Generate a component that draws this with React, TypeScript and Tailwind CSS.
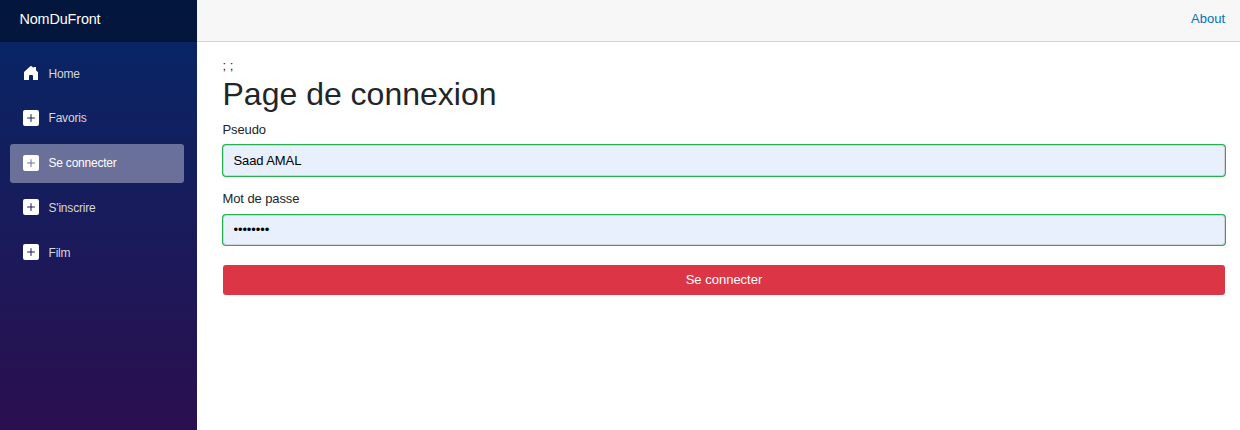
import { BsPlusSquareFill } from 'react-icons/bs';

function HomeIcon({ className }: { className?: string }) {
  return (
    <svg viewBox="0 0 16 16" fill="currentColor" className={className}>
      <path d="M6 15H1.500a.5.5 0 0 1-.5-.5V7.500c0-.3.1-.6.3-.8L7.300 1.300a1 1 0 0 1 1.400 0L10.500 3V2H13v3.300l1.600 1.500c.2.200.4.500.4.800v6.900a.5.5 0 0 1-.5.5H10v-4a1 1 0 0 0-1-1H7a1 1 0 0 0-1 1z" />
    </svg>
  );
}

const links = [
  { label: 'Home', icon: HomeIcon, active: false },
  { label: 'Favoris', icon: BsPlusSquareFill, active: false },
  { label: 'Se connecter', icon: BsPlusSquareFill, active: true },
  { label: "S'inscrire", icon: BsPlusSquareFill, active: false },
  { label: 'Film', icon: BsPlusSquareFill, active: false },
];

function Sidebar() {
  return (
    <aside className="w-[197px] shrink-0 bg-[linear-gradient(180deg,#052767_0px,#3a0647_600px)]">
      <div className="flex h-[42px] items-center bg-black/40 pb-[3px] pl-[19.5px] text-[14.4px] tracking-[-0.14px] text-white">
        NomDuFront
      </div>
      <nav className="flex flex-col gap-[5.8px] px-[10px] pt-[12.1px]">
        {links.map(({ label, icon: Icon, active }) => (
          <a
            key={label}
            href="#"
            className={
              active
                ? 'flex h-[39px] w-[174px] items-center rounded-[3px] bg-white/37 pl-[13px] text-[12px] tracking-[-0.22px] text-white'
                : 'flex h-[39px] w-[174px] items-center rounded-[3px] pl-[13px] text-[12px] tracking-[-0.2px] text-[#d7d7d7]'
            }
          >
            <Icon className="mr-[9.5px] mb-[1.2px] size-4 text-white" />
            <span>{label}</span>
          </a>
        ))}
      </nav>
    </aside>
  );
}

const inputClass =
  'block w-full rounded-[3px] border border-[#ced4da] bg-[#e8f0fe] px-[9.5px] pb-px text-[13px] tracking-[-0.1px] text-black shadow-[0_0_0_1px_#26b050] outline-none';

export default function App() {
  return (
    <div className="flex h-[430px] w-full bg-white font-['Liberation_Sans',Arial,sans-serif] text-[13px] text-[#212529]">
      <Sidebar />
      <main className="min-w-0 flex-1">
        <header className="flex h-[42px] items-center justify-end border-b border-[#d6d5d5] bg-[#f7f7f7] pr-[15px] pb-[3px]">
          <a href="#" className="text-[13px] text-[#0071c1]">About</a>
        </header>
        <section className="pt-[14px] pr-[15px] pl-[26px]">
          <div className="-ml-[0.5px] h-[19px] leading-[19px]">; ;</div>
          <h1 className="-ml-[0.5px] h-[38px] text-[32px] leading-[38px]">Page de connexion</h1>
          <form>
            <label htmlFor="pseudo" className="mt-[7px] -ml-[0.5px] block h-[25px] leading-[19px] tracking-[-0.1px]">Pseudo</label>
            <input id="pseudo" type="text" defaultValue="Saad AMAL" className={`${inputClass} h-[31px]`} />
            <label htmlFor="password" className="mt-[13px] -ml-[0.5px] block h-[26px] leading-[19px] tracking-[-0.1px]">Mot de passe</label>
            <input id="password" type="password" defaultValue="password" className={`${inputClass} h-[30px]`} />
            <button type="button" className="mt-[20px] block h-[30px] w-full rounded-[3px] bg-[#dc3545] text-[13px] text-white">
              Se connecter
            </button>
          </form>
        </section>
      </main>
    </div>
  );
}
